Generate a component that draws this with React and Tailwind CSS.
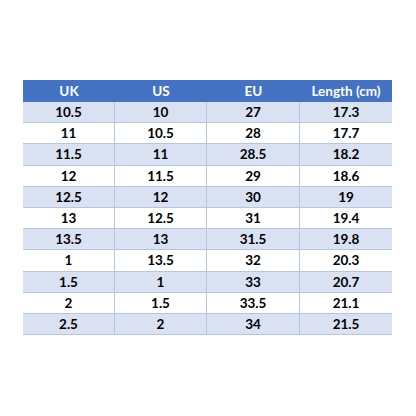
const headers = ["UK", "US", "EU", "Length (cm)"];

const rows = [
  ["10.5", "10", "27", "17.3"],
  ["11", "10.5", "28", "17.7"],
  ["11.5", "11", "28.5", "18.2"],
  ["12", "11.5", "29", "18.6"],
  ["12.5", "12", "30", "19"],
  ["13", "12.5", "31", "19.4"],
  ["13.5", "13", "31.5", "19.8"],
  ["1", "13.5", "32", "20.3"],
  ["1.5", "1", "33", "20.7"],
  ["2", "1.5", "33.5", "21.1"],
  ["2.5", "2", "34", "21.5"],
];

export default function App() {
  return (
    <div className="w-[416px] h-[416px] bg-white pt-[80px] pl-[23px] font-['Lato',sans-serif]">
      <div className="w-[369px]">
        <div className="grid grid-cols-[92px_92px_93px_92px] h-[22px] bg-[#4472c4] text-white font-bold text-[13.5px]">
          {headers.map((h) => (
            <div key={h} className="flex items-center justify-center">
              {h}
            </div>
          ))}
        </div>
        {rows.map((r, i) => (
          <div
            key={i}
            className={
              "grid grid-cols-[92px_92px_93px_92px] h-[21.2px] border-b border-[#b4c6e7] text-[13.5px] font-bold text-black " +
              (i % 2 === 0 ? "bg-[#d9e1f2]" : "bg-white")
            }
          >
            {r.map((c, j) => (
              <div
                key={j}
                className={
                  "flex items-center justify-center " +
                  (j < 3 ? "border-r border-[#b4c6e7]" : "")
                }
              >
                {c}
              </div>
            ))}
          </div>
        ))}
      </div>
    </div>
  );
}
